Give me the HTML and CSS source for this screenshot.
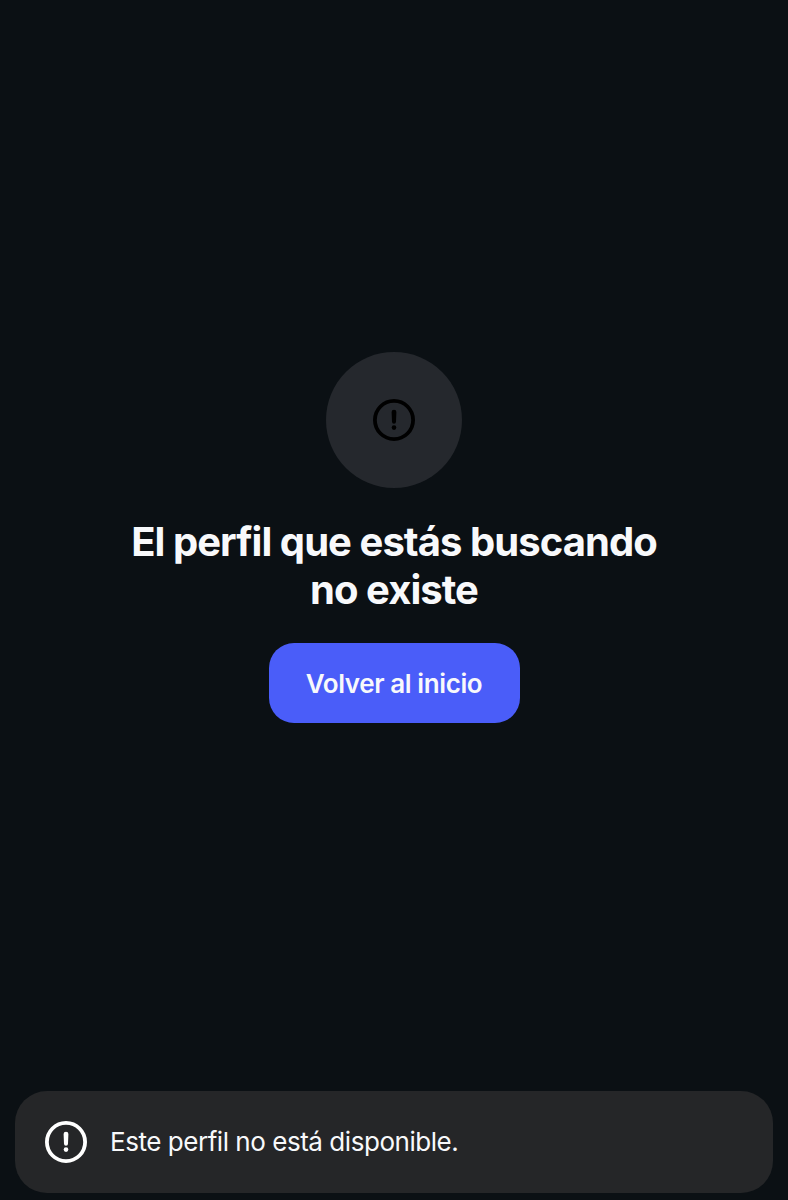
FILE: index.html
```html
<!DOCTYPE html>
<html lang="es">
<head>
    <meta charset="UTF-8">
    <meta name="viewport" content="width=device-width, initial-scale=1.0">
    <title>Perfil no disponible</title>
    <link rel="stylesheet" href="styles.css">
</head>
<body>
    <main class="empty">
        <div class="badge">
            <svg class="icon" viewBox="0 0 42 42" aria-hidden="true">
                <circle class="ring" cx="21" cy="21" r="19.1"/>
                <path class="mark" d="M18.6 13.1a2.4 2.4 0 0 1 4.8 0l-.4 9.7a2 2 0 0 1-4 0z"/>
                <circle class="mark" cx="21" cy="28.6" r="2.3"/>
            </svg>
        </div>
        <h1 class="title"><span class="line">El perfil que estás buscando</span> <span class="line">no existe</span></h1>
        <button class="button" type="button">Volver al inicio</button>
    </main>

    <div class="toast" role="status">
        <svg class="icon" viewBox="0 0 42 42" aria-hidden="true">
            <circle class="ring" cx="21" cy="21" r="19.1"/>
            <path class="mark" d="M18.6 13.1a2.4 2.4 0 0 1 4.8 0l-.4 9.7a2 2 0 0 1-4 0z"/>
            <circle class="mark" cx="21" cy="28.6" r="2.3"/>
        </svg>
        <p class="message">Este perfil no está disponible.</p>
    </div>
</body>
</html>
```
FILE: styles.css
```css
* {
    margin: 0;
    padding: 0;
    box-sizing: border-box;
}

body {
    display: flex;
    flex-direction: column;
    height: 100vh;
    padding: 0 15px 7px;
    overflow: hidden;
    background-color: #0b1014;
    color: #f8f9fb;
    font-family: Inter, "Liberation Sans", sans-serif;
}

.empty {
    flex: 1;
    display: flex;
    flex-direction: column;
    align-items: center;
    padding-top: 352px;
}

.badge {
    display: flex;
    justify-content: center;
    align-items: center;
    width: 136px;
    height: 136px;
    border-radius: 50%;
    background-color: #25282d;
    color: #000;
}

.icon {
    display: block;
    flex: none;
    width: 42px;
    height: 42px;
}

.ring {
    fill: none;
    stroke: currentColor;
    stroke-width: 3.8;
}

.mark {
    fill: currentColor;
}

.title {
    margin-top: 30px;
    font-size: 40px;
    font-weight: 700;
    line-height: 48px;
    letter-spacing: -0.94px;
    text-align: center;
    white-space: nowrap;
}

.line {
    display: block;
}

.button {
    width: 251px;
    height: 80px;
    margin-top: 29px;
    border: none;
    border-radius: 25px;
    background-color: #4a5df9;
    color: #f8f9fb;
    font-family: inherit;
    font-size: 26px;
    font-weight: 600;
    letter-spacing: -0.4px;
    white-space: nowrap;
}

/* aviso inferior */
.toast {
    display: flex;
    align-items: center;
    height: 102px;
    padding: 0 30px;
    border-radius: 32px;
    background-color: #252628;
}

.toast .icon {
    color: #fff;
}

.message {
    margin-left: 23px;
    font-size: 26px;
    line-height: 34px;
    letter-spacing: -0.46px;
    white-space: nowrap;
}
```
